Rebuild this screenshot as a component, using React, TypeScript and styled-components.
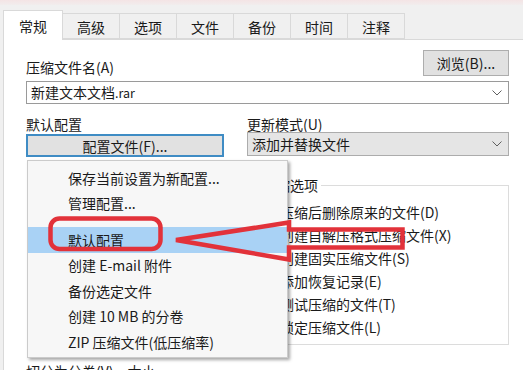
import React from "react";
import styled, { createGlobalStyle } from "styled-components";

const GlobalStyle = createGlobalStyle`
  html, body {
    margin: 0;
    padding: 0;
  }
  body {
    background: #f0f0f0;
    font-family: "Noto Sans CJK SC", "Noto Sans", sans-serif;
    font-size: 14px;
    color: #1a1a1a;
    overflow: hidden;
  }
`;

const Window = styled.div`
  position: relative;
  width: 523px;
  height: 370px;
  overflow: hidden;
  display: flex;
  flex-direction: column;
  background: #f0f0f0;
`;

const TitleEdge = styled.div`
  flex-shrink: 0;
  height: 5px;
  background: linear-gradient(#f4e4e5, #f1eded);
`;

const TabBar = styled.div`
  flex-shrink: 0;
  display: flex;
  align-items: flex-end;
  height: 34px;
  padding-left: 3px;
  position: relative;
  z-index: 1;
`;

const Tab = styled.div<{ $active?: boolean }>`
  box-sizing: border-box;
  display: flex;
  align-items: center;
  justify-content: center;
  width: ${(p) => (p.$active ? 60 : 57)}px;
  height: ${(p) => (p.$active ? 30 : 26)}px;
  margin-bottom: ${(p) => (p.$active ? -1 : 0)}px;
  background: ${(p) => (p.$active ? "#ffffff" : "#f0f0f0")};
  border: 1px solid #d9d9d9;
  border-bottom: ${(p) => (p.$active ? "none" : "1px solid #d9d9d9")};
  border-left-width: ${(p) => (p.$active ? 1 : 0)}px;
  line-height: 18px;
  padding-top: ${(p) => (p.$active ? 0 : 1)}px;
`;

const Panel = styled.div`
  flex: 1;
  min-height: 0;
  overflow: hidden;
  background: #ffffff;
  margin-left: 3px;
  border-top: 1px solid #d9d9d9;
  border-left: 1px solid #d9d9d9;
  padding: 10px 14px 0 22px;
`;

const TopRow = styled.div`
  display: flex;
  justify-content: space-between;
  align-items: flex-end;
`;

const Label = styled.div`
  line-height: 18px;
  white-space: nowrap;
`;

const PushButton = styled.div<{ $focused?: boolean; $width?: number }>`
  box-sizing: border-box;
  display: flex;
  align-items: center;
  justify-content: center;
  width: ${(p) => (p.$width ? `${p.$width}px` : "auto")};
  height: ${(p) => (p.$focused ? 23 : 26)}px;
  margin-top: ${(p) => (p.$focused ? 1 : 0)}px;
  background: #e1e1e1;
  border: ${(p) => (p.$focused ? "2px solid #3f8cc4" : "1px solid #adadad")};
  line-height: 18px;
`;

const Combo = styled.div<{ $filled?: boolean }>`
  box-sizing: border-box;
  display: flex;
  align-items: center;
  justify-content: space-between;
  height: ${(p) => (p.$filled ? 24 : 23)}px;
  margin-top: ${(p) => (p.$filled ? -1 : 5)}px;
  padding: 0 6px 0 4px;
  background: ${(p) => (p.$filled ? "#e5e5e5" : "#ffffff")};
  border: 1px solid ${(p) => (p.$filled ? "#acacac" : "#9a9a9a")};
  line-height: 18px;
`;

const Ext = styled.span`
  font-size: 12.5px;
`;

const FieldGrid = styled.div`
  display: grid;
  grid-template-columns: 198px 1fr;
  column-gap: 23px;
  margin-top: 11px;
`;

const Field = styled.div`
  display: flex;
  flex-direction: column;
`;

const GroupBox = styled.fieldset`
  grid-column: 2;
  margin: 19px 0 0 0;
  padding: 6px 0 6px 0;
  border: 1px solid #dcdcdc;
  min-width: 0;
`;

const Legend = styled.legend`
  margin-left: 11px;
  padding: 0 3px;
  line-height: 18px;
`;

const OptionRow = styled.div`
  display: flex;
  align-items: center;
  gap: 3px;
  height: 23px;
  padding-left: 16px;
  white-space: nowrap;
`;

const CheckBox = styled.span`
  box-sizing: border-box;
  width: 13px;
  height: 13px;
  border: 1px solid #333;
  background: #fff;
`;

const SplitLabel = styled(Label)`
  margin-top: 17px;
`;

const Menu = styled.div`
  position: absolute;
  left: 27px;
  top: 160px;
  width: 261px;
  height: 198px;
  box-sizing: border-box;
  padding: 4px 0 0;
  background: #f7f7f7;
  border: 1px solid #cbcbcb;
  box-shadow: 2px 2px 3px rgba(0, 0, 0, 0.35);
  z-index: 2;
`;

const MenuItem = styled.div<{ $selected?: boolean }>`
  display: flex;
  align-items: center;
  height: 25.5px;
  padding-left: 40px;
  background: ${(p) => (p.$selected ? "#a9d2f5" : "transparent")};
  white-space: nowrap;
`;

const MenuGap = styled.div`
  height: 11px;
`;

const Annotation = styled.svg`
  position: absolute;
  left: 0;
  top: 0;
  z-index: 3;
  pointer-events: none;
`;

function Chevron() {
  return (
    <svg width="10" height="6" viewBox="0 0 10 6">
      <polyline points="0.5,0.5 5,5 9.5,0.5" fill="none" stroke="#5f5f5f" strokeWidth="1" />
    </svg>
  );
}

const tabs = ["常规", "高级", "选项", "文件", "备份", "时间", "注释"];

const options = [
  "压缩后删除原来的文件(D)",
  "创建自解压格式压缩文件(X)",
  "创建固实压缩文件(S)",
  "添加恢复记录(E)",
  "测试压缩的文件(T)",
  "锁定压缩文件(L)",
];

const profileMenu = [
  "保存当前设置为新配置...",
  "管理配置...",
  null,
  "默认配置",
  "创建 E-mail 附件",
  "备份选定文件",
  "创建 10 MB 的分卷",
  "ZIP 压缩文件(低压缩率)",
];

export default function App() {
  return (
    <Window>
      <GlobalStyle />
      <TitleEdge />
      <TabBar>
        {tabs.map((t, i) => (
          <Tab key={t} $active={i === 0}>
            {t}
          </Tab>
        ))}
      </TabBar>

      <Panel>
        <TopRow>
          <Label>压缩文件名(A)</Label>
          <PushButton $width={86}>浏览(B)...</PushButton>
        </TopRow>
        <Combo>
          <span>
            新建文本文档<Ext>.rar</Ext>
          </span>
          <Chevron />
        </Combo>

        <FieldGrid>
          <Field>
            <Label>默认配置</Label>
            <PushButton $focused>配置文件(F)...</PushButton>
          </Field>
          <Field>
            <Label>更新模式(U)</Label>
            <Combo $filled>
              <span>添加并替换文件</span>
              <Chevron />
            </Combo>
          </Field>

          <GroupBox>
            <Legend>压缩选项</Legend>
            {options.map((o) => (
              <OptionRow key={o}>
                <CheckBox />
                <span>{o}</span>
              </OptionRow>
            ))}
          </GroupBox>
        </FieldGrid>

        <SplitLabel>切分为分卷(V)，大小</SplitLabel>
      </Panel>

      <Menu>
        {profileMenu.map((m, i) =>
          m === null ? (
            <MenuGap key={i} />
          ) : (
            <MenuItem key={m} $selected={m === "默认配置"}>
              {m}
            </MenuItem>
          )
        )}
      </Menu>

      {/* red markup drawn over the screenshot */}
      <Annotation width="523" height="370" viewBox="0 0 523 370">
        <rect x="50.5" y="218.5" width="110" height="30.5" rx="9" fill="none" stroke="#e2323a" strokeWidth="4.5" />
        <polygon
          points="176,240 289,222.5 289,229.5 402.5,229.5 402.5,247.5 289,247.5 289,259.5"
          fill="none"
          stroke="#e2323a"
          strokeWidth="4.5"
          strokeLinejoin="miter"
        />
      </Annotation>
    </Window>
  );
}
